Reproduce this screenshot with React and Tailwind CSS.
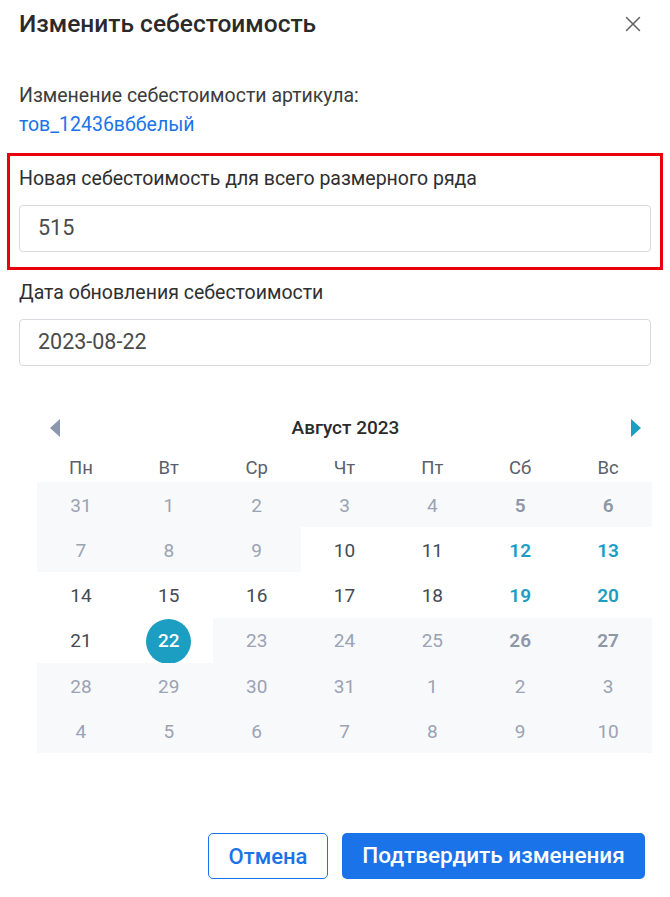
import { X } from "lucide-react";

const TEAL = "#1b9ec1";

// kind: "other" = other month, "off" = disabled, "offWe" = disabled weekend, "on" = active, "we" = active weekend, "sel" = selected
const weeks = [
  [[31, "other"], [1, "off"], [2, "off"], [3, "off"], [4, "off"], [5, "offWe"], [6, "offWe"]],
  [[7, "off"], [8, "off"], [9, "off"], [10, "on"], [11, "on"], [12, "we"], [13, "we"]],
  [[14, "on"], [15, "on"], [16, "on"], [17, "on"], [18, "on"], [19, "we"], [20, "we"]],
  [[21, "on"], [22, "sel"], [23, "off"], [24, "off"], [25, "off"], [26, "offWe"], [27, "offWe"]],
  [[28, "off"], [29, "off"], [30, "off"], [31, "off"], [1, "other"], [2, "other"], [3, "other"]],
  [[4, "other"], [5, "other"], [6, "other"], [7, "other"], [8, "other"], [9, "other"], [10, "other"]],
];

const dayNames = ["Пн", "Вт", "Ср", "Чт", "Пт", "Сб", "Вс"];

const DayCell = ({ day, kind }) => {
  const shaded = kind === "other" || kind === "off" || kind === "offWe";
  if (kind === "sel") {
    return (
      <div className="flex h-[45.2px] items-center justify-center pt-[2px]">
        <span className="flex h-[45px] w-[45px] items-center justify-center rounded-full bg-[#1b9ec1] text-[19px] font-medium text-white">
          {day}
        </span>
      </div>
    );
  }
  const tone =
    kind === "on"
      ? "text-[#454a55]"
      : kind === "we"
        ? "font-semibold text-[#1b9ec1]"
        : kind === "offWe"
          ? "font-semibold text-[#8e97a8]"
          : "text-[#9ba3b4]";
  return (
    <div className={`flex h-[45.2px] items-center justify-center pt-[3px] text-[19px] ${shaded ? "bg-[#f8f9fb]" : ""} ${tone}`}>
      {day}
    </div>
  );
};

const App = () => {
  return (
    <div
      className="relative h-[897px] w-[670px] overflow-hidden bg-white text-[#333]"
      style={{ fontFamily: "Roboto, 'Noto Sans', sans-serif" }}
    >
      <div className="flex h-[48px] items-center justify-between pl-[19px] pr-[24px]">
        <h2 className="text-[24.5px] font-medium text-[#2a2a2a]">Изменить себестоимость</h2>
        <X size={26} strokeWidth={1.4} className="text-[#666]" />
      </div>

      <div className="mt-[33px] px-[19px] text-[19.5px] leading-[29px]">
        <div className="text-[#3c3c3c]">Изменение себестоимости артикула:</div>
        <a className="text-[#1a73e8]">тов_12436вббелый</a>
      </div>

      <div className="mx-[7px] mt-[14px] border-[3px] border-[#e8000d] px-[9px] pb-[15px] pt-[11px]">
        <div className="text-[19.5px] leading-[24px] text-[#2f2f2f]">Новая себестоимость для всего размерного ряда</div>
        <div className="mt-[14px] flex h-[47px] items-center rounded-[4px] border border-[#d6d9de] px-[18px] text-[21.5px] text-[#4a4a4a]">
          515
        </div>
      </div>

      <div className="px-[19px] pt-[11px]">
        <div className="text-[19.5px] leading-[24px] text-[#2f2f2f]">Дата обновления себестоимости</div>
        <div className="mt-[14px] flex h-[47px] items-center rounded-[4px] border border-[#d6d9de] px-[18px] text-[21.5px] text-[#4a4a4a]">
          2023-08-22
        </div>
      </div>

      <div className="mx-[37px] mt-[49px] w-[615px]">
        <div className="flex h-[26px] items-center justify-between pl-[13px] pr-[11px]">
          <svg width="10" height="18" viewBox="0 0 10 18">
            <path d="M10 0 L0 9 L10 18 Z" fill="#8b97ae" />
          </svg>
          <span className="text-[19px] font-medium text-[#2b2b2b]">Август 2023</span>
          <svg width="10" height="18" viewBox="0 0 10 18">
            <path d="M0 0 L10 9 L0 18 Z" fill={TEAL} />
          </svg>
        </div>
        <div className="mt-[14px] grid h-[27px] grid-cols-7 items-center text-[18.5px] text-[#5a606b]">
          {dayNames.map((d) => (
            <div key={d} className="text-center">{d}</div>
          ))}
        </div>
        <div className="grid grid-cols-7">
          {weeks.flat().map(([day, kind], i) => (
            <DayCell key={i} day={day} kind={kind} />
          ))}
        </div>
      </div>

      <div className="mt-[80px] flex justify-end gap-[14px] pr-[25px]">
        <button className="h-[46px] w-[120px] rounded-[5px] border border-[#1a73e8] text-[22px] font-medium text-[#1a73e8]">
          Отмена
        </button>
        <button className="h-[46px] w-[303px] rounded-[5px] bg-[#1a73e8] text-[22.5px] font-medium text-white">
          Подтвердить изменения
        </button>
      </div>
    </div>
  );
};

export default App;
